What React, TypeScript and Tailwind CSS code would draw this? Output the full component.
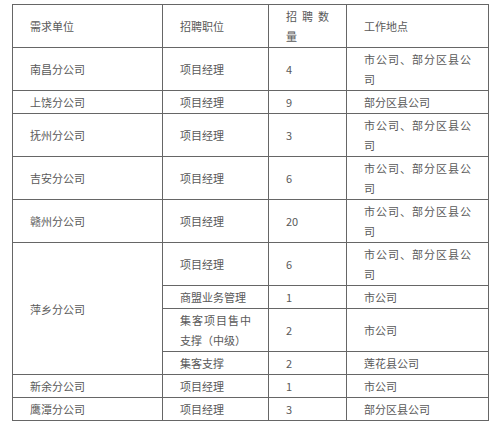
import React from "react";

const td =
  "border border-[#666666] px-[17px] py-px align-middle text-justify";

type Row = { unit?: string; span?: number; pos: string; num: string; loc: string };

const rows: Row[] = [
  { unit: "南昌分公司", pos: "项目经理", num: "4", loc: "市公司、部分区县公司" },
  { unit: "上饶分公司", pos: "项目经理", num: "9", loc: "部分区县公司" },
  { unit: "抚州分公司", pos: "项目经理", num: "3", loc: "市公司、部分区县公司" },
  { unit: "吉安分公司", pos: "项目经理", num: "6", loc: "市公司、部分区县公司" },
  { unit: "赣州分公司", pos: "项目经理", num: "20", loc: "市公司、部分区县公司" },
  { unit: "萍乡分公司", span: 4, pos: "项目经理", num: "6", loc: "市公司、部分区县公司" },
  { pos: "商盟业务管理", num: "1", loc: "市公司" },
  { pos: "集客项目售中支撑（中级）", num: "2", loc: "市公司" },
  { pos: "集客支撑", num: "2", loc: "莲花县公司" },
  { unit: "新余分公司", pos: "项目经理", num: "1", loc: "市公司" },
  { unit: "鹰潭分公司", pos: "项目经理", num: "3", loc: "部分区县公司" },
];

export default function App() {
  return (
    <div
      className="w-[500px] h-[427px] bg-white pt-[4px] pl-[12px]"
      style={{ fontFamily: '"Noto Sans CJK SC", "Noto Sans", sans-serif' }}
    >
      <table className="table-fixed border-collapse w-[476px] text-[11px] leading-[20px] text-[#595959]">
        <colgroup>
          <col className="w-[150px]" />
          <col className="w-[106px]" />
          <col className="w-[78px]" />
          <col className="w-[142px]" />
        </colgroup>
        <tbody>
          <tr>
            <td className={td}>需求单位</td>
            <td className={td}>招聘职位</td>
            <td className={td}>招 聘 数 量</td>
            <td className={td}>工作地点</td>
          </tr>
          {rows.map((r, i) => (
            <tr key={i}>
              {r.unit !== undefined && (
                <td className={td} rowSpan={r.span ?? 1}>
                  {r.unit}
                </td>
              )}
              <td className={td}>{r.pos}</td>
              <td className={td}>{r.num}</td>
              <td className={td}>{r.loc}</td>
            </tr>
          ))}
        </tbody>
      </table>
    </div>
  );
}
